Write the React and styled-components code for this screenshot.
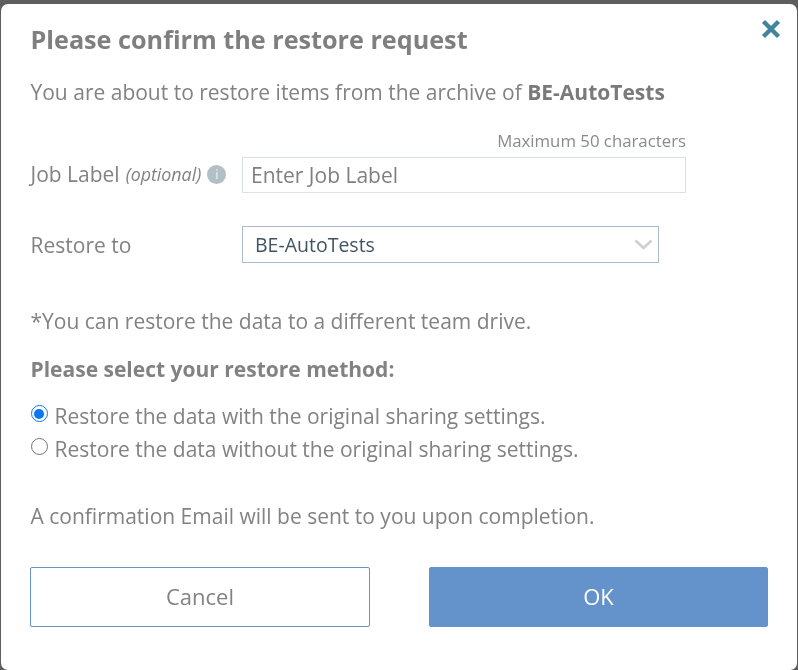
import React from "react";
import styled, { createGlobalStyle } from "styled-components";

const Global = createGlobalStyle`
  html, body { margin: 0; padding: 0; background: #5e5e5e; }
  body { font-family: "Open Sans", "Liberation Sans", sans-serif; width: 798px; height: 670px; overflow: hidden; }
  * { box-sizing: border-box; }
`;

const Backdrop = styled.div`
  width: 798px;
  height: 670px;
  padding: 4px 1px 0 1px;
  background: #5e5e5e;
`;

const Modal = styled.div`
  position: relative;
  width: 796px;
  height: 666px;
  background: #fff;
  border-radius: 7px;
  padding: 19px 29px 0 29.5px;
  display: flex;
  flex-direction: column;
  color: #828282;
  will-change: transform;
`;

const Close = styled.button`
  position: absolute;
  top: 14px;
  right: 15px;
  width: 22px;
  height: 22px;
  padding: 0;
  border: 0;
  background: none;
  display: flex;
  align-items: center;
  justify-content: center;
`;

const Title = styled.h1`
  margin: 0;
  font-size: 25.2px;
  line-height: 32px;
  font-weight: 700;
  color: #7f7f7f;
`;

const Text = styled.p`
  margin: ${(p) => p.$top || 0}px 0 0;
  font-size: 21px;
  line-height: 28px;
  font-weight: ${(p) => (p.$bold ? 700 : 400)};
  color: #828282;
  b { font-weight: 700; color: #7a7a7a; }
`;

const Hint = styled.div`
  margin-top: 25px;
  height: 20px;
  margin-right: 82px;
  text-align: right;
  font-size: 16.8px;
  line-height: 20px;
  color: #8a8a8a;
`;

const Row = styled.div`
  display: flex;
  align-items: center;
  margin-top: ${(p) => p.$top}px;
`;

const Label = styled.label`
  width: 211.5px;
  flex: none;
  display: flex;
  align-items: center;
  font-size: 21px;
  line-height: 28px;
  color: #828282;
  margin-bottom: ${(p) => p.$lift || 0}px;
`;

const Optional = styled.em`
  font-size: 17.8px;
  margin-left: 6px;
  font-style: italic;
`;

const Info = styled.span`
  width: 19px;
  height: 19px;
  margin-left: 6px;
  border-radius: 50%;
  background: #b2bfc4;
  color: #d8e0e3;
  font-size: 12px;
  font-weight: 700;
  line-height: 19px;
  text-align: center;
`;

const Input = styled.input`
  width: 444px;
  height: 36px;
  padding: 0 8px;
  border: 1px solid #dbe0e3;
  outline: none;
  font: 400 21px "Open Sans", sans-serif;
  color: #7f7f7f;
  &::placeholder { color: #7f7f7f; opacity: 1; }
`;

const Select = styled.div`
  width: 417px;
  height: 37px;
  padding: 0 5px 0 12px;
  border: 1px solid #adbbd0;
  display: flex;
  align-items: center;
  justify-content: space-between;
  font-size: 19.5px;
  color: #3f5563;
`;

const Radios = styled.div`
  margin-top: 19px;
  display: flex;
  flex-direction: column;
  gap: 5px;
`;

const RadioRow = styled.label`
  display: flex;
  align-items: center;
  height: 28px;
  font-size: 21px;
  color: #828282;
`;

const Radio = styled.input`
  appearance: none;
  width: 17px;
  height: 17px;
  margin: 0 7px 5px 0;
  flex: none;
  border-radius: 50%;
  background: #fff;
  border: 1.5px solid ${(p) => (p.checked ? "#0b76f5" : "#757575")};
  display: grid;
  place-items: center;
  &:checked::after {
    content: "";
    width: 10px;
    height: 10px;
    border-radius: 50%;
    background: #0b76f5;
  }
`;

const Actions = styled.div`
  margin-top: 37px;
  margin-left: -0.5px;
  display: flex;
  justify-content: space-between;
`;

const Button = styled.button`
  height: 60px;
  width: ${(p) => p.$w}px;
  padding: 0 0 2px;
  border-radius: 2px;
  border: 1px solid #6492cb;
  background: ${(p) => (p.$primary ? "#6492cb" : "#fff")};
  color: ${(p) => (p.$primary ? "#fff" : "#828282")};
  font: 400 22px "Open Sans", sans-serif;
`;

export default function App() {
  return (
    <Backdrop>
      <Global />
      <Modal>
        <Close aria-label="Close">
          <svg width="20" height="20" viewBox="0 0 20 20">
            <path d="M2.5 2.5 L17.5 17.5 M17.5 2.5 L2.5 17.5" stroke="#41859b" strokeWidth="4.4" fill="none" />
          </svg>
        </Close>
        <Title>Please confirm the restore request</Title>
        <Text $top={23}>
          You are about to restore items from the archive of <b>BE-AutoTests</b>
        </Text>
        <Hint>Maximum 50 characters</Hint>
        <Row $top={6}>
          <Label $lift={2}>
            Job Label <Optional>(optional)</Optional>
            <Info>i</Info>
          </Label>
          <Input placeholder="Enter Job Label" />
        </Row>
        <Row $top={33}>
          <Label>Restore to</Label>
          <Select>
            BE-AutoTests
            <svg width="19" height="11" viewBox="0 0 19 11">
              <path d="M1.5 1.5 L9.5 9 L17.5 1.5" stroke="#cfcfcf" strokeWidth="2.6" fill="none" />
            </svg>
          </Select>
        </Row>
        <Text $top={44}>*You can restore the data to a different team drive.</Text>
        <Text $top={20} $bold>Please select your restore method:</Text>
        <Radios>
          <RadioRow>
            <Radio type="radio" name="method" defaultChecked checked readOnly />
            Restore the data with the original sharing settings.
          </RadioRow>
          <RadioRow>
            <Radio type="radio" name="method" readOnly />
            Restore the data without the original sharing settings.
          </RadioRow>
        </Radios>
        <Text $top={39}>A confirmation Email will be sent to you upon completion.</Text>
        <Actions>
          <Button $w={340}>Cancel</Button>
          <Button $w={339} $primary>OK</Button>
        </Actions>
      </Modal>
    </Backdrop>
  );
}
